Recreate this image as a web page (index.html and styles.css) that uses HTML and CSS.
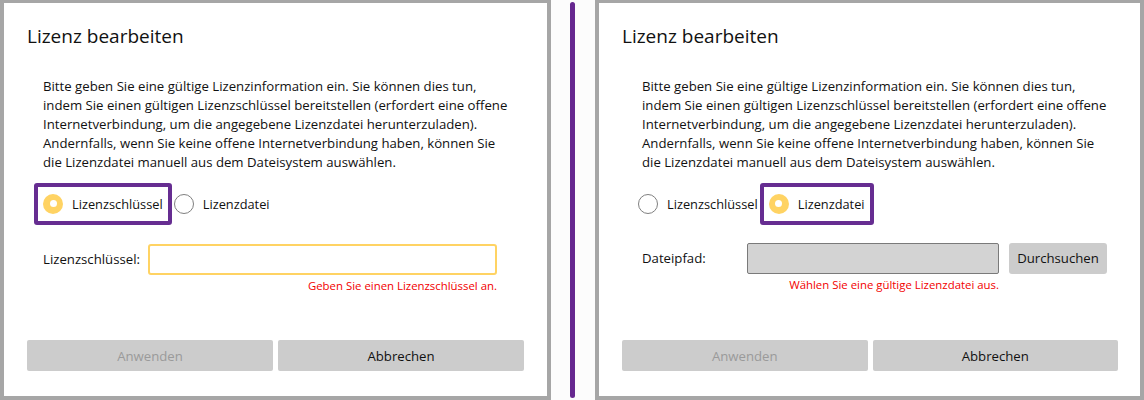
FILE: index.html
```html
<!DOCTYPE html>
<html lang="de">
<head>
<meta charset="utf-8">
<title>Lizenz bearbeiten</title>
<link rel="stylesheet" href="styles.css">
</head>
<body>
<div class="page">
  <section class="panel panel-left">
    <h1 class="title">Lizenz bearbeiten</h1>
    <p class="intro">Bitte geben Sie eine gültige Lizenzinformation ein. Sie können dies tun,<br>indem Sie einen gültigen Lizenzschlüssel bereitstellen (erfordert eine offene<br>Internetverbindung, um die angegebene Lizenzdatei herunterzuladen).<br>Andernfalls, wenn Sie keine offene Internetverbindung haben, können Sie<br>die Lizenzdatei manuell aus dem Dateisystem auswählen.</p>
    <div class="radios">
      <label class="radio radio-on highlight"><span class="dot"></span><span>Lizenzschlüssel</span></label>
      <label class="radio"><span class="dot"></span><span>Lizenzdatei</span></label>
    </div>
    <div class="field">
      <span class="field-label label-key">Lizenzschlüssel:</span>
      <span class="input input-key"></span>
    </div>
    <div class="error error-key">Geben Sie einen Lizenzschlüssel an.</div>
    <div class="actions">
      <span class="btn btn-disabled">Anwenden</span>
      <span class="btn">Abbrechen</span>
    </div>
  </section>
  <div class="divider"><span class="line"></span></div>
  <section class="panel panel-right">
    <h1 class="title">Lizenz bearbeiten</h1>
    <p class="intro intro-shift">Bitte geben Sie eine gültige Lizenzinformation ein. Sie können dies tun,<br>indem Sie einen gültigen Lizenzschlüssel bereitstellen (erfordert eine offene<br>Internetverbindung, um die angegebene Lizenzdatei herunterzuladen).<br>Andernfalls, wenn Sie keine offene Internetverbindung haben, können Sie<br>die Lizenzdatei manuell aus dem Dateisystem auswählen.</p>
    <div class="radios">
      <label class="radio"><span class="dot"></span><span>Lizenzschlüssel</span></label>
      <label class="radio radio-on highlight"><span class="dot"></span><span>Lizenzdatei</span></label>
    </div>
    <div class="field field-file">
      <span class="field-label label-file">Dateipfad:</span>
      <span class="input input-file"></span>
      <span class="btn btn-browse">Durchsuchen</span>
    </div>
    <div class="error error-file">Wählen Sie eine gültige Lizenzdatei aus.</div>
    <div class="actions">
      <span class="btn btn-disabled">Anwenden</span>
      <span class="btn">Abbrechen</span>
    </div>
  </section>
</div>
</body>
</html>
```

FILE: styles.css
```css
* { box-sizing: border-box; }

html, body {
  margin: 0;
  padding: 0;
  background: #fcfcfc;
}

body {
  font-family: "Open Sans", "Noto Sans", sans-serif;
  color: #111;
}

.page {
  display: flex;
  height: 400px;
  width: 1144px;
}

.panel {
  display: flex;
  flex-direction: column;
  height: 400px;
  background: #fff;
  border: 4px solid #a6a6a6;
  border-top-width: 3px;
  padding: 0 23px 25px 23px;
}

.panel-left { width: 551px; }
.panel-right { width: 549px; padding-right: 22px; }

.divider {
  flex: 0 0 44px;
  display: flex;
  justify-content: center;
  padding: 2px 0 2px 0;
}

.line {
  display: block;
  width: 5px;
  margin-left: -1px;
  background: #66278f;
  border-radius: 3px;
}

.title {
  margin: 19px 0 0 0;
  font-size: 19px;
  line-height: 28px;
  font-weight: 400;
  color: #111;
}

.intro {
  margin: 27px 0 0 16px;
  font-size: 13.2px;
  line-height: 18.9px;
  white-space: nowrap;
}

.intro-shift { margin-left: 20px; }

.radios {
  display: flex;
  gap: 11px;
  margin: 20px 0 0 16px;
  height: 24px;
}

.radio {
  position: relative;
  display: flex;
  align-items: center;
  gap: 9px;
  font-size: 12.8px;
  height: 24px;
}

.highlight::before {
  content: "";
  position: absolute;
  top: -9px;
  bottom: -9px;
  left: -9px;
  right: -9px;
  border: 4px solid #662d91;
  border-radius: 3px;
  pointer-events: none;
}

.dot {
  width: 20px;
  height: 20px;
  border-radius: 50%;
  border: 1.3px solid #7f7f7f;
  background: #fff;
  display: flex;
  align-items: center;
  justify-content: center;
}

.radio-on .dot {
  border: none;
  background: #ffd363;
}

.radio-on .dot::after {
  content: "";
  width: 7px;
  height: 7px;
  border-radius: 50%;
  background: #fff;
}

.field {
  display: flex;
  align-items: center;
  margin: 28px 0 0 16px;
  height: 31px;
  font-size: 13.2px;
}

.field-file { margin: 27px 0 0 20px; }

.label-key { width: 105px; }
.label-file { width: 105px; }

.input {
  height: 31px;
  border-radius: 3px;
}

.input-key {
  width: 349px;
  border: 2px solid #ffd363;
  background: #fff;
}

.input-file {
  width: 252px;
  border: 1px solid #7a7a7a;
  background: #d3d3d3;
  border-radius: 2px;
}

.error {
  margin-top: 3px;
  font-size: 11.4px;
  line-height: 15px;
  color: #f20000;
  text-align: right;
}

.error-key { width: 470px; }
.error-file { width: 377px; }

.btn {
  display: flex;
  align-items: center;
  justify-content: center;
  height: 31px;
  background: #cccccc;
  border-radius: 2px;
  font-size: 13.2px;
  color: #111;
}

.btn-browse {
  width: 98px;
  margin-left: 10px;
  border-radius: 3px;
}

.btn-disabled { color: #9a9a9a; }

.actions {
  margin-top: auto;
  display: grid;
  grid-template-columns: 1fr 1fr;
  gap: 5px;
}
```
